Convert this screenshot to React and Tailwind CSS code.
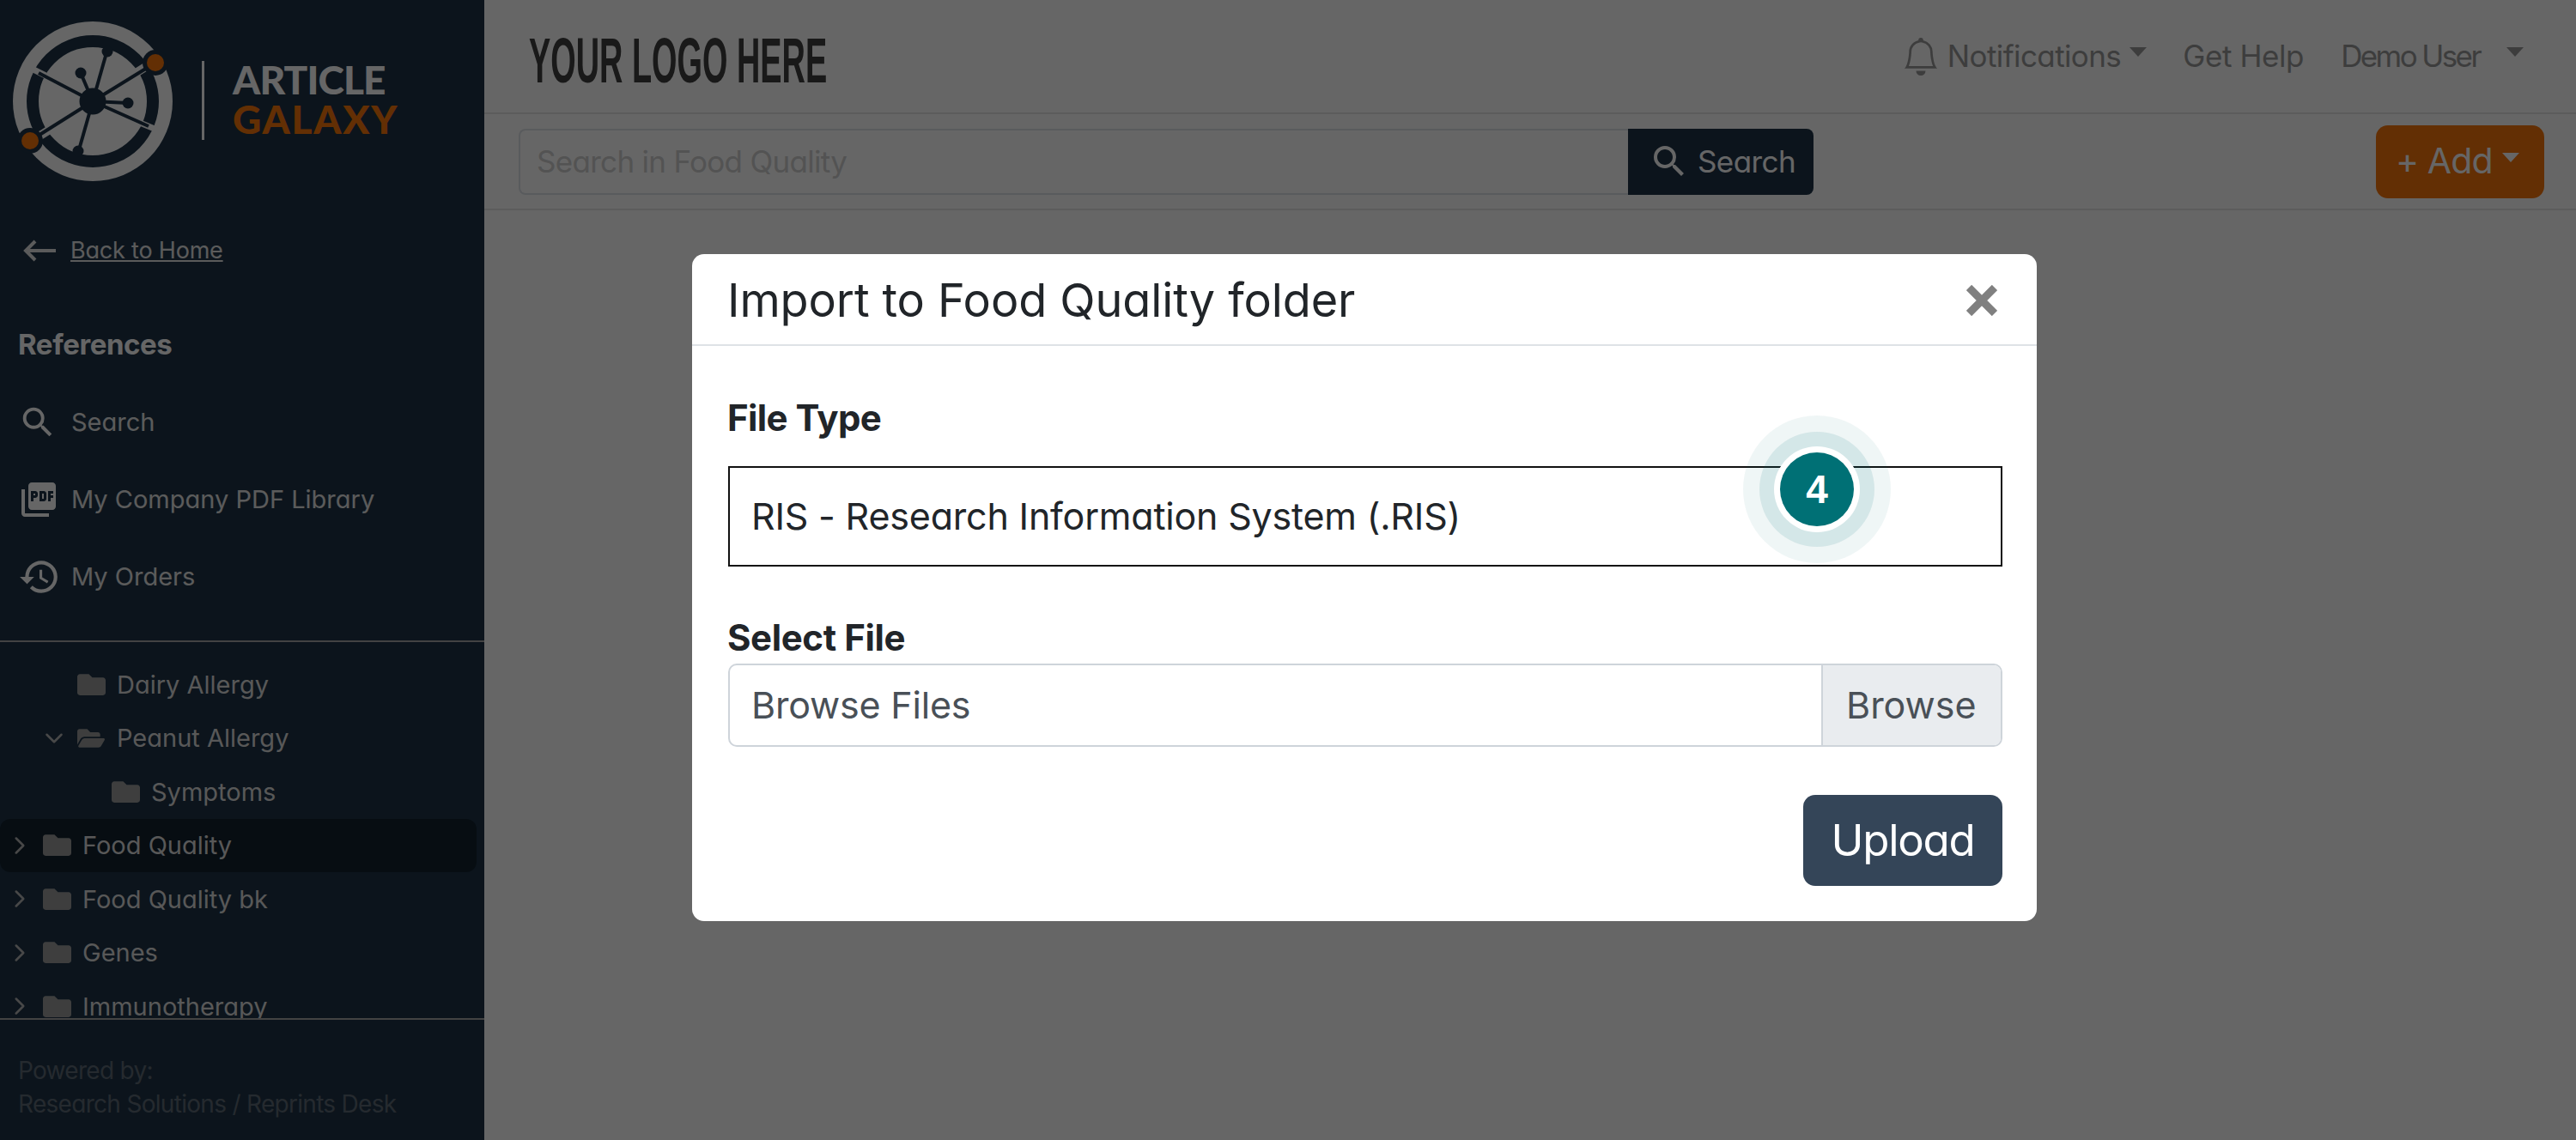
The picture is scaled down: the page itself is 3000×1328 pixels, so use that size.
import React from "react";
import { MdSearch, MdPictureAsPdf, MdHistory } from "react-icons/md";
import { BsBell } from "react-icons/bs";
import { FaFolder, FaFolderOpen } from "react-icons/fa";
import { ChevronRight, ChevronDown } from "lucide-react";

const F = "font-['Inter',sans-serif] [font-feature-settings:'cv11']";

function GalaxyMark() {
  return (
    <svg viewBox="0 0 187 187" className="w-[187px] h-[187px] shrink-0">
      <circle cx="93" cy="93" r="93" fill="#ffffff" />
      <circle cx="93" cy="93" r="70" fill="none" stroke="#1e3448" strokeWidth="14" />
      <g stroke="#ffffff">
        <line x1="38" y1="63" x2="24" y2="56" strokeWidth="7" />
        <line x1="148" y1="118" x2="165" y2="125" strokeWidth="7" />
        <line x1="140" y1="62" x2="156" y2="52" strokeWidth="10" />
        <line x1="46" y1="124" x2="30" y2="134" strokeWidth="10" />
      </g>
      <g stroke="#1e3448" strokeWidth="4">
        <line x1="93" y1="93" x2="166" y2="48" />
        <line x1="93" y1="93" x2="20" y2="139" />
        <line x1="93" y1="93" x2="110" y2="33" />
        <line x1="93" y1="93" x2="76" y2="153" />
        <line x1="93" y1="93" x2="30" y2="60" />
        <line x1="93" y1="93" x2="158" y2="122" />
        <line x1="93" y1="93" x2="134" y2="95" />
        <line x1="93" y1="93" x2="79" y2="60" />
      </g>
      <circle cx="93" cy="93" r="15.5" fill="#1e3448" />
      <circle cx="134" cy="95" r="6.5" fill="#1e3448" />
      <circle cx="79" cy="60" r="6.5" fill="#1e3448" />
      <circle cx="110" cy="35" r="6.5" fill="#1e3448" />
      <circle cx="76" cy="151" r="6.5" fill="#1e3448" />
      <circle cx="166" cy="48" r="15" fill="#1e3448" />
      <circle cx="20" cy="139" r="15" fill="#1e3448" />
      <circle cx="166" cy="48" r="10" fill="#f7750a" />
      <circle cx="20" cy="139" r="10" fill="#f7750a" />
    </svg>
  );
}

function Caret({ className }) {
  return <span className={"inline-block w-0 h-0 border-x-[10px] border-x-transparent border-t-[11px] " + className} />;
}

function NavRow({ icon, label }) {
  return (
    <div className="h-[90px] flex items-center">
      <div className="w-[83px] shrink-0 pl-[24px]">{icon}</div>
      <span className="text-[29px] tracking-[0px] text-[#e4e4e4]">{label}</span>
    </div>
  );
}

function TreeRow({ indent, chevron, open, label }) {
  return (
    <div className={"h-[62.5px] flex items-center " + indent}>
      <span className="w-[32px] shrink-0 flex items-center">
        {chevron === "right" && <ChevronRight size={34} strokeWidth={1.8} className="text-[#b4b4b4] shrink-0 -ml-[12px]" />}
        {chevron === "down" && <ChevronDown size={34} strokeWidth={1.8} className="text-[#b4b4b4] shrink-0 -ml-[12.5px]" />}
      </span>
      <span className="w-[33px] shrink-0 flex items-center">
        {open ? (
          <FaFolderOpen size={32} className="text-[#9c9c9c] shrink-0" />
        ) : (
          <FaFolder size={33} className="text-[#9c9c9c] shrink-0" />
        )}
      </span>
      <span className="ml-[13px] text-[29px] tracking-[0px] text-[#dcdcdc] whitespace-nowrap">{label}</span>
    </div>
  );
}

export default function App() {
  return (
    <div className={"relative flex w-[3000px] h-[1328px] overflow-hidden bg-white " + F}>
      <aside className="w-[564px] shrink-0 h-full flex flex-col bg-[#1e3448]">
        <div className="h-[260px] shrink-0 pl-[15px] pt-[25px] flex items-start">
          <GalaxyMark />
          <div className="w-[3px] h-[92px] bg-white mt-[46px] ml-[33px] shrink-0" />
          <div className="ml-[33px] mt-[45px] font-['Lato',sans-serif] font-black text-[46px] leading-[46px]">
            <div className="text-white tracking-[-0.9px]">ARTICLE</div>
            <div className="text-[#f7750a] tracking-[1.7px]">GALAXY</div>
          </div>
        </div>
        <div className="h-[62px] shrink-0 flex items-center pt-[2px]">
          <svg viewBox="0 0 38 26" className="w-[38px] h-[26px] ml-[27px] shrink-0 text-[#e4e4e4]" fill="none" stroke="currentColor" strokeWidth="4">
            <path d="M38 13 H3 M14 2 L3 13 L14 24" />
          </svg>
          <span className="ml-[17px] text-[27px] tracking-[-0.2px] underline text-[#e4e4e4]">Back to Home</span>
        </div>
        <div className="h-[62px] mt-[49px] shrink-0 pl-[21px] flex items-center text-[33px] font-bold tracking-[-0.4px] text-white">
          References
        </div>
        <div className="mt-[14px] shrink-0">
          <NavRow icon={<MdSearch size={46} className="text-white -ml-[3px]" />} label="Search" />
          <NavRow icon={<MdPictureAsPdf size={48} className="text-white -ml-[3px]" />} label="My Company PDF Library" />
          <NavRow icon={<MdHistory size={50} className="text-white -ml-[3px]" />} label="My Orders" />
        </div>
        <div className="mt-[29px] h-[2px] shrink-0 bg-[#a8a8a8]" />
        <div className="h-[438px] shrink-0 pt-[18px] overflow-hidden">
          <TreeRow indent="pl-[58px]" label="Dairy Allergy" />
          <TreeRow indent="pl-[58px]" chevron="down" open label="Peanut Allergy" />
          <TreeRow indent="pl-[98px]" label="Symptoms" />
          <div className="mr-[9px] rounded-[12px] bg-[#12212f]">
            <TreeRow indent="pl-[18px]" chevron="right" label="Food Quality" />
          </div>
          <TreeRow indent="pl-[18px]" chevron="right" label="Food Quality bk" />
          <TreeRow indent="pl-[18px]" chevron="right" label="Genes" />
          <TreeRow indent="pl-[18px]" chevron="right" label="Immunotherapy" />
        </div>
        <div className="h-[2px] shrink-0 bg-[#a8a8a8]" />
        <div className="pl-[21px] pt-[40px] text-[28px] leading-[39px] tracking-[-0.7px] text-[#5e6975]">
          <div>Powered by:</div>
          <div>Research Solutions / Reprints Desk</div>
        </div>
      </aside>

      <main className="flex-1 flex flex-col min-w-0">
        <header className="h-[133px] shrink-0 border-b-2 border-[#e6e6e6] flex items-center justify-between pl-[52px] pr-[61px]">
          <span className="inline-block origin-left scale-x-[0.505] mt-[10px] font-['Liberation_Sans',sans-serif] font-bold text-[75px] leading-none whitespace-nowrap text-[#3f3f3f] w-[347px]">
            YOUR LOGO HERE
          </span>
          <div className="flex items-center text-[35px] text-[#9a9a9a]">
            <BsBell size={44} className="-mr-[1px]" />
            <span className="ml-[10px] tracking-[-0.6px]">Notifications</span>
            <Caret className="border-t-[#9a9a9a] ml-[10px] -mt-[10px]" />
            <span className="ml-[42px] tracking-[-0.4px]">Get Help</span>
            <span className="ml-[43px] tracking-[-2.6px]">Demo User</span>
            <Caret className="border-t-[#9a9a9a] ml-[31px] -mt-[10px]" />
          </div>
        </header>
        <div className="h-[112px] shrink-0 border-b-2 border-[#e6e6e6] flex items-center justify-between pl-[40px] pr-[37px]">
          <div className="flex h-[77px] w-[1508px]">
            <div className="w-[1292px] border-2 border-r-0 border-[#dfe3e8] rounded-l-[8px] flex items-center pl-[19px] text-[35px] tracking-[-0.7px] text-[#cfcfcf]">
              Search in Food Quality
            </div>
            <div className="flex-1 bg-[#1e3448] rounded-r-[8px] flex items-center pl-[24px] text-[35px] tracking-[-0.6px] text-white">
              <MdSearch size={48} className="shrink-0" />
              <span className="ml-[9px]">Search</span>
            </div>
          </div>
          <div className="w-[196px] h-[85px] rounded-[14px] bg-[#f7750a] flex items-center pl-[23px] text-[41px] tracking-[-0.9px] text-white">
            <span>+ Add</span>
            <Caret className="border-t-white ml-[11px] -mt-[10px]" />
          </div>
        </div>
      </main>

      <div className="absolute inset-0 bg-black/60" />

      <div className="absolute left-[806px] top-[296px] w-[1566px] h-[777px] rounded-[14px] bg-white text-[#212529]">
        <div className="h-[107px] border-b-2 border-[#dee2e6] flex items-center justify-between pl-[41px] pr-[46px]">
          <span className="text-[54px] tracking-[-0.1px] pt-[1px]">Import to Food Quality folder</span>
          <svg viewBox="0 0 36 36" className="w-[36px] h-[36px] mt-[2px]">
            <path d="M3 3 L33 33 M33 3 L3 33" stroke="#808080" strokeWidth="9" />
          </svg>
        </div>
        <div className="pl-[42px] pr-[40px]">
          <div className="mt-[58px] h-[50px] -ml-[1px] flex items-center text-[42px] font-bold tracking-[-0.6px]">File Type</div>
          <div className="mt-[32px] h-[117px] border-2 border-[#111] flex items-center pl-[25px] text-[43px] tracking-[-0.2px]">
            RIS - Research Information System (.RIS)
          </div>
          <div className="mt-[57px] h-[50px] -ml-[1px] flex items-center text-[42px] font-bold tracking-[-0.4px]">Select File</div>
          <div className="mt-[6px] h-[97px] flex border-2 border-[#ced4da] rounded-[10px] overflow-hidden text-[#495057] text-[43px] tracking-[-0.2px]">
            <div className="flex-1 flex items-center pl-[25px]">Browse Files</div>
            <div className="w-[209px] border-l-2 border-[#ced4da] bg-[#e9ecef] flex items-center pl-[27px] tracking-[0px]">Browse</div>
          </div>
          <div className="mt-[56px] flex justify-end">
            <button className="w-[232px] h-[106px] rounded-[14px] bg-[#344558] text-white text-[51px] tracking-[-1.3px] flex items-center justify-center">
              Upload
            </button>
          </div>
        </div>
      </div>

      <div className="absolute left-[2030px] top-[484px] w-[172px] h-[172px] rounded-full bg-[#00707510] flex items-center justify-center">
        <div className="w-[134px] h-[134px] rounded-full bg-[#0070751c] flex items-center justify-center">
          <div className="w-[100px] h-[100px] rounded-full bg-white flex items-center justify-center">
            <div className="w-[86px] h-[86px] rounded-full bg-[#007075] text-white font-['Liberation_Sans',sans-serif] font-bold text-[46px] flex items-center justify-center">
              4
            </div>
          </div>
        </div>
      </div>
    </div>
  );
}
